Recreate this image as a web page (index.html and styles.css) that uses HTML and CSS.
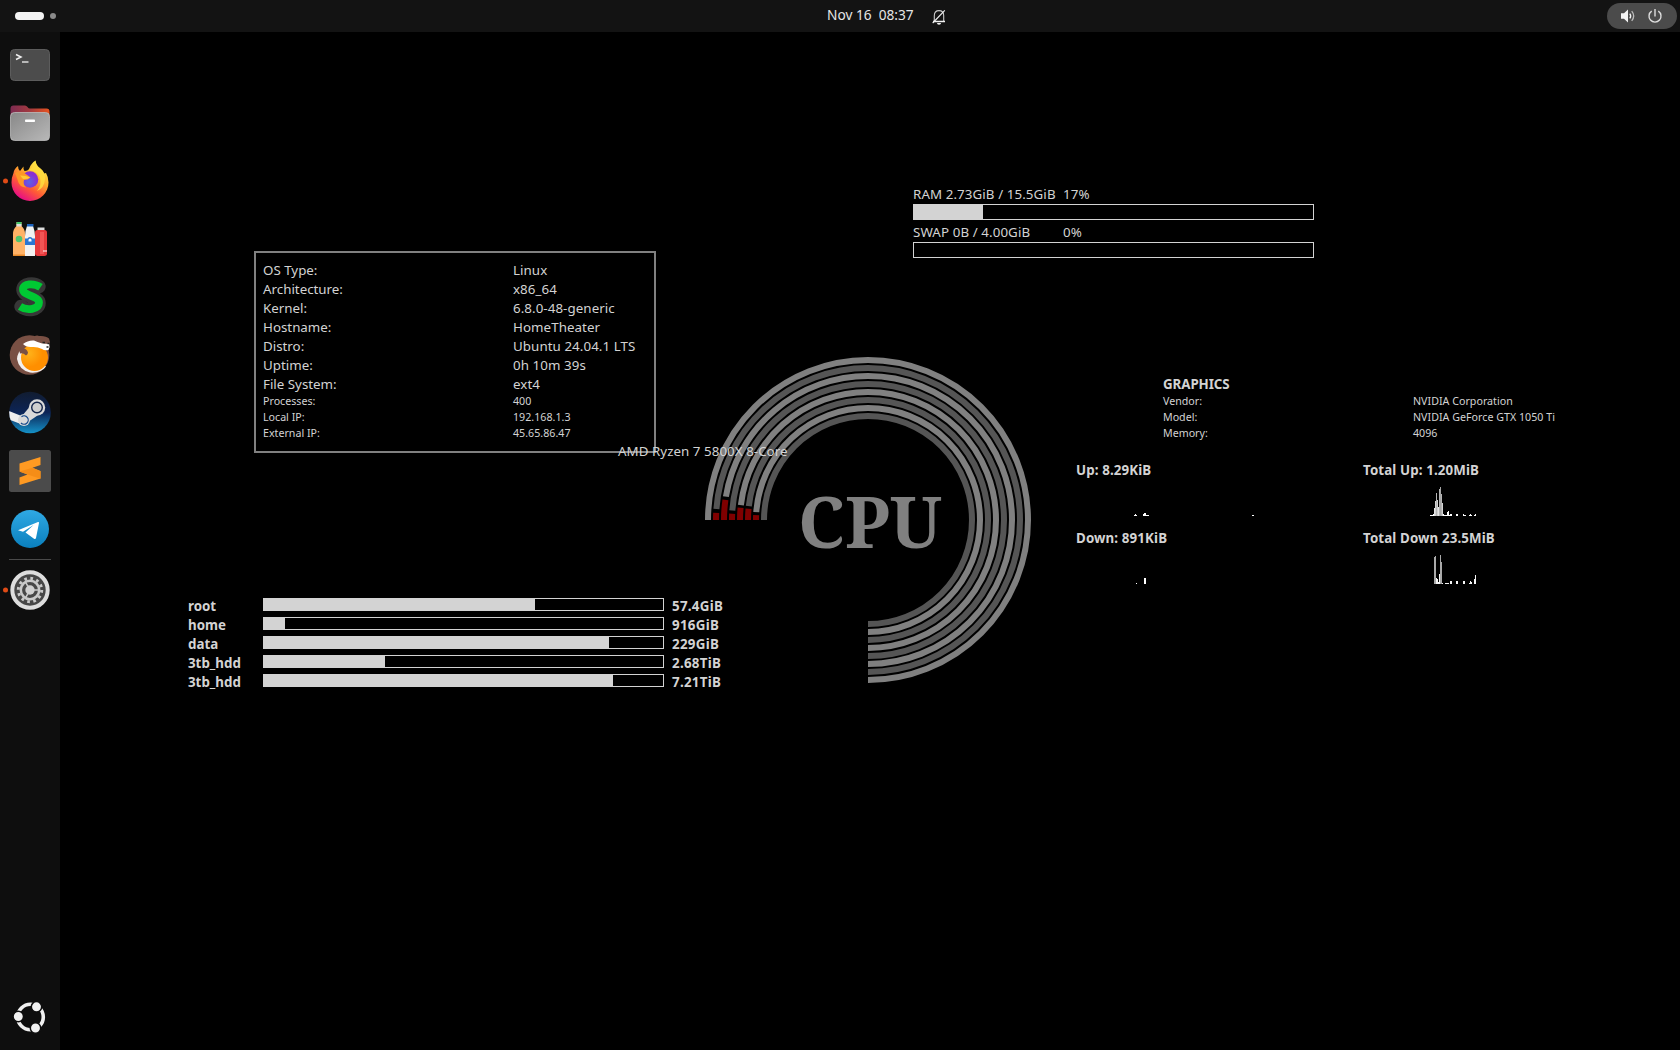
FILE: index.html
```html
<!DOCTYPE html>
<html lang="en">
<head>
<meta charset="utf-8">
<title>Desktop</title>
<link rel="stylesheet" href="styles.css">
</head>
<body>
<header class="topbar">
  <div class="workspaces"><span class="ws-active"></span><span class="ws-dot"></span></div>
  <div class="clock">Nov 16&nbsp; 08:37</div>
  <svg class="bell" width="14" height="16" viewBox="0 0 14 16" fill="none" stroke="#f2f2f2" stroke-width="1.1">
    <path d="M2.3 12V6.8C2.3 3.6 4 1.6 7 1.6s4.700 2 4.700 5.200V12" stroke="#c8c8c8"/>
    <path d="M1 12.500h12" stroke-width="1.500"/>
    <path d="M.7 14 12.800 1.300"/>
    <path d="M5 14h4a2 1.700 0 0 1-4 0z" fill="#f2f2f2" stroke="none"/>
  </svg>
  <div class="tray">
    <svg width="16" height="16" viewBox="0 0 16 16" fill="none" stroke="#f4f4f4" stroke-width="1.300">
      <path d="M1 5.300h3L8 1.500v13l-4-3.800H1z" fill="#f4f4f4" stroke="none"/>
      <path d="M9.800 5.600q1.800 2.400 0 4.800"/><path d="M11.700 3.200q4 4.800 0 9.600" stroke="#bbb"/>
    </svg>
    <svg width="16" height="16" viewBox="0 0 16 16" fill="none" stroke="#ddd" stroke-width="1.400">
      <path d="M4.700 3.100a6 6 0 1 0 6.600 0"/><path d="M8 1v7.500"/>
    </svg>
  </div>
</header>
<div class="shell">
  <nav class="dock">
    <svg class="app" viewBox="0 0 60 58">
      <rect x="10.500" y="13.500" width="39" height="31" rx="4" fill="#4c4c4c" stroke="#5c5c5c"/>
      <path d="M16 18.500l5 2.500-5 2.500" fill="none" stroke="#eee" stroke-width="1.500"/><path d="M22 26h6.500" stroke="#ddd" stroke-width="1.500"/>
    </svg>
    <svg class="app" viewBox="0 0 60 58">
      <defs>
        <linearGradient id="tab"><stop offset="0" stop-color="#7d2b51"/><stop offset=".5" stop-color="#a33a3f"/><stop offset="1" stop-color="#e95420"/></linearGradient>
        <linearGradient id="front" x2="1" y2="1"><stop offset="0" stop-color="#888"/><stop offset="1" stop-color="#b8b8b8"/></linearGradient>
      </defs>
      <path d="M10.500 24V14.500a3 3 0 0 1 3-3H25q1.500 0 2.500 1.500t2.500 1.500h16.500a3 3 0 0 1 3 3V24z" fill="url(#tab)"/>
      <rect x="10.500" y="18.500" width="39" height="28" rx="4" fill="url(#front)" stroke="#bdbdbd" stroke-width=".8"/>
      <rect x="25" y="25.500" width="10" height="2.600" rx=".8" fill="#fff"/>
    </svg>
    <svg class="app" viewBox="0 0 60 58">
      <defs>
        <linearGradient id="fox" x1=".85" y1=".1" x2=".3" y2="1"><stop offset="0" stop-color="#fff44f"/><stop offset=".35" stop-color="#ffb02c"/><stop offset=".65" stop-color="#ff5a36"/><stop offset="1" stop-color="#e5078c"/></linearGradient>
        <radialGradient id="globe" cx=".45" cy=".65"><stop offset="0" stop-color="#5b63e8"/><stop offset="1" stop-color="#8a2fd0"/></radialGradient>
      </defs>
      <circle cx="5.500" cy="29" r="2.500" fill="#df4b16"/>
      <path d="M13.500 21q.5-4 4.500-7 0 3.500 2 5l3.500-4.500q-.5 2.500 1 4.500 4 0 5-3 1.500-4.500 6-7.500 .5 5 4.500 8 3 2 4 5l2-.5q2.500 4 2.500 9.500a18.500 18.500 0 0 1-37 0q0-5 2-9.500z" fill="url(#fox)"/>
      <circle cx="30" cy="27.500" r="8.300" fill="url(#globe)"/>
      <path d="M29 18q5.500-4.500 6.500-9.500 .5 5 4.500 7.500 5.500 4 5 11-.5 9-8 12 5-6 3-13-2-7-11-8z" fill="#ffdd3f" opacity=".85"/>
      <path d="M15 21q6-3 10 .500 3 2 5.500 4-2.500 2.500-6.500 2.500-1.500 5 2.500 7.500-7.500 0-9-8z" fill="#ff9626"/>
      <path d="M20 23.500q6 0 10 2-3 2-7 1.500z" fill="#ffc934"/>
    </svg>
    <svg class="app" viewBox="0 0 60 58">
      <path d="M16.500 12h5v4q3.500 3 3.500 8v22H13V24q0-5 3.500-8z" fill="#ffb266"/><path d="M16.500 12h5v3h-5z" fill="#46c96f"/><path d="M16.500 14h5v2.500h-5z" fill="#ddd"/>
      <circle cx="19" cy="29" r="3.300" fill="#4fc46d"/><path d="M13 44.500h12V46H13z" fill="#e88a2a"/>
      <path d="M27 16h6q2 5 2 10v20H25V26q0-5 2-10z" fill="#f1f1f1"/><path d="M27 14h6.500v2.500H27z" fill="#1b62bd"/><path d="M25 28.500h10v6.500H25z" fill="#2a76d2"/><path d="M27.500 32v-2.500a2.500 2.500 0 0 1 5 0V32z" fill="#2a76d2"/><path d="M28.500 31.500v-1.500a1.500 1.500 0 0 1 3 0v1.500z" fill="#fff"/>
      <rect x="35" y="20" width="12" height="26" rx="2.500" fill="#e5393c"/><path d="M40 22h4v22h-4z" fill="#f25555"/><path d="M37.500 17.500h7V20h-7z" fill="#ddd"/><path d="M43 41h4" stroke="#fff"/>
    </svg>
    <svg class="app" viewBox="0 0 60 58" fill="none">
      <path d="M39 18.500C34 14.500 22.500 15 23 22c.5 6.500 16 6.500 16 13 0 7-11.500 8.500-18 3.500" stroke="#373737" stroke-width="13.500" stroke-linecap="round" stroke-linejoin="round"/>
      <path d="M40.500 19.300C34 14.800 22.800 15.300 23 21.500c.3 6.500 16 6.500 16 13 0 7-12 8.500-19 4" stroke="#00c933" stroke-width="7.800"/>
    </svg>
    <svg class="app" viewBox="0 0 60 58">
      <defs><radialGradient id="orange" cx=".3" cy=".35"><stop offset="0" stop-color="#ffb21a"/><stop offset="1" stop-color="#ff8f00"/></radialGradient></defs>
      <circle cx="29.500" cy="29" r="19.800" fill="#795044"/>
      <path d="M34 10.500q3-1.800 5-.5 7-.5 10 2.500 1.500 3 .5 7L36 20z" fill="#795044"/>
      <path d="M19 26q-2 4-2 7 2 11 13 13.500 11 1 16-6L20 25z" fill="#f3f0ee"/>
      <circle cx="34.500" cy="31.500" r="13.500" fill="url(#orange)"/>
      <path d="M23 18q5-4 11-3.500 7 3.500 15 3.500 1.500 3-.5 6-4 1-6.500-1-5-2.500-10-2-6 .5-9-3z" fill="#fff"/>
      <path d="M19 23.500q7-3 9 3 0 2-2 3-3-3-6-2z" fill="#795044"/>
      <path d="M42.500 16.500h2.500m1.500 4.500h2m-1-3.500h2" stroke="#222" stroke-width="1.500"/>
    </svg>
    <svg class="app" viewBox="0 0 60 58">
      <defs><linearGradient id="steam" x2="0" y2="1"><stop offset="0" stop-color="#111c30"/><stop offset=".5" stop-color="#0c2456"/><stop offset="1" stop-color="#1592c8"/></linearGradient>
      <clipPath id="steam-clip"><circle cx="30" cy="28.500" r="20.800"/></clipPath></defs>
      <circle cx="30" cy="28.500" r="20.800" fill="url(#steam)"/>
      <g clip-path="url(#steam-clip)" fill="#d9d9d9">
        <path d="M8 26.500l16 6.500-2 7.500L8 35z" fill="#eee"/>
        <path d="M29.500 23l8 8.500-9.500 6.500-6-6z"/>
        <circle cx="37" cy="23.500" r="8.200"/><circle cx="24" cy="36" r="6"/>
        <circle cx="37" cy="23.500" r="5.300" fill="#cfcfcf" stroke="#14264b" stroke-width="1.400"/>
        <path d="M21.500 32.700a4.200 4.200 0 1 1-.5 6.300" fill="none" stroke="#16498a" stroke-width="1.200"/>
      </g>
    </svg>
    <svg class="app" viewBox="0 0 60 58">
      <rect x="9" y="8" width="42" height="42" rx="2.500" fill="#4b4b4b"/>
      <path d="M40.500 15v8l-8 2.800 8 3.200v7.500L19.500 43v-7.500l8-3-8-3V21.500z" fill="#ff9a22"/>
      <path d="M19.500 29.500l8 3 13 4.200v-7.500l-8-3.400z" fill="#f58d17"/>
    </svg>
    <svg class="app" viewBox="0 0 60 58">
      <defs><linearGradient id="tg" x2="0" y2="1"><stop offset="0" stop-color="#2fa9e4"/><stop offset="1" stop-color="#0a7fbd"/></linearGradient></defs>
      <circle cx="30" cy="29" r="19" fill="url(#tg)"/>
      <path d="M18 30.300 38 22q1.200-.3 1 1l-3 15q-.5 1.700-2 .7l-8.500-6.300 8-7.400-10.500 6.800z" fill="#fff"/>
    </svg>
    <div class="separator"></div>
    <svg class="app" viewBox="0 0 60 58">
      <circle cx="5.500" cy="29" r="2.500" fill="#df4b16"/>
      <circle cx="30" cy="29" r="17.700" fill="#474747" stroke="#ddd" stroke-width="4"/>
      <circle cx="30" cy="29" r="11.700" fill="none" stroke="#c9c9c9" stroke-width="3" stroke-dasharray="2.700 3.426"/>
      <circle cx="30" cy="29" r="9.200" fill="none" stroke="#c9c9c9" stroke-width="2.500"/>
      <circle cx="30" cy="29" r="4.700" fill="#d0d0d0"/>
      <path d="M34 29h5M28 25.500l-2.500-4.300M28 32.500l-2.500 4.300" stroke="#c9c9c9" stroke-width="1.500"/>
    </svg>
    <svg class="app launcher" viewBox="0 0 60 58">
      <circle cx="30.500" cy="29" r="12.800" fill="none" stroke="#f0f0f0" stroke-width="3.600"/>
      <g fill="#f2f2f2" stroke="#0e0e0e" stroke-width="1.500"><circle cx="18.300" cy="28.500" r="5.200"/><circle cx="36.500" cy="18.800" r="5.200"/><circle cx="35.500" cy="40" r="5.200"/></g>
    </svg>
  </nav>

  <main class="desktop">
    <svg class="widget cpu" width="330" height="330" viewBox="703 355 330 330">
      <g fill="none" stroke-width="6">
        <g stroke="#808080">
          <path d="M708 520A160 160 0 1 1 868 680"/>
          <path d="M724 520A144 144 0 1 1 868 664" stroke-dasharray="0 23.500 2000"/>
          <path d="M740 520A128 128 0 1 1 868 648" stroke-dasharray="0 15 2000"/>
          <path d="M756 520A112 112 0 1 1 868 632" stroke-dasharray="0 8 2000"/>
        </g>
        <g stroke="#555">
          <path d="M716 520A152 152 0 1 1 868 672" stroke-dasharray="0 11 2000"/>
          <path d="M732 520A136 136 0 1 1 868 656" stroke-dasharray="0 9.500 2000"/>
          <path d="M748 520A120 120 0 1 1 868 640" stroke-dasharray="0 14 2000"/>
          <path d="M764 520A104 104 0 1 1 868 624"/>
        </g>
        <g stroke="#800000">
          <path d="M716 520A152 152 0 1 1 868 672" stroke-dasharray="7.200 2000"/>
          <path d="M724 520A144 144 0 1 1 868 664" stroke-dasharray="20.300 2000"/>
          <path d="M732 520A136 136 0 1 1 868 656" stroke-dasharray="6.300 2000"/>
          <path d="M740 520A128 128 0 1 1 868 648" stroke-dasharray="12.200 2000"/>
          <path d="M748 520A120 120 0 1 1 868 640" stroke-dasharray="11.200 2000"/>
          <path d="M756 520A112 112 0 1 1 868 632" stroke-dasharray="5 2000"/>
        </g>
      </g>
      <text class="cpu-label" x="798" y="548" textLength="144" lengthAdjust="spacingAndGlyphs">CPU</text>
    </svg>

    <section class="widget system">
      <dl class="pairs">
        <dt>OS Type:</dt><dd>Linux</dd>
        <dt>Architecture:</dt><dd>x86_64</dd>
        <dt>Kernel:</dt><dd>6.8.0-48-generic</dd>
        <dt>Hostname:</dt><dd>HomeTheater</dd>
        <dt>Distro:</dt><dd>Ubuntu 24.04.1 LTS</dd>
        <dt>Uptime:</dt><dd>0h 10m 39s</dd>
        <dt>File System:</dt><dd>ext4</dd>
      </dl>
      <dl class="pairs small">
        <dt>Processes:</dt><dd>400</dd>
        <dt>Local IP:</dt><dd>192.168.1.3</dd>
        <dt>External IP:</dt><dd>45.65.86.47</dd>
      </dl>
    </section>
    <div class="widget cpu-name">AMD Ryzen 7 5800X 8-Core</div>

    <section class="widget memory">
      <div class="mem-row"><span>RAM 2.73GiB / 15.5GiB</span><span>17%</span></div>
      <div class="bar"><div class="fill" style="width:69px"></div></div>
      <div class="mem-row"><span>SWAP 0B / 4.00GiB</span><span>0%</span></div>
      <div class="bar"></div>
    </section>

    <section class="widget graphics">
      <h2>GRAPHICS</h2>
      <dl class="pairs small">
        <dt>Vendor:</dt><dd>NVIDIA Corporation</dd>
        <dt>Model:</dt><dd>NVIDIA GeForce GTX 1050 Ti</dd>
        <dt>Memory:</dt><dd>4096</dd>
      </dl>
    </section>

    <section class="widget network">
      <div><h2>Up: 8.29KiB</h2>
        <svg width="200" height="30" viewBox="1076 0 200 30" stroke="#fff"><path d="M1134.500 30v-1m1 1v-2m1 2v-1M1143.500 30v-2m1 2v-3m1 3v-3m1 3v-1m1 1v-1m1 1v-1M1252.500 30v-1m1 1v-1"/></svg></div>
      <div><h2>Total Up: 1.20MiB</h2>
        <svg width="200" height="30" viewBox="-67 0 200 30"><path stroke="#fff" d="M.5 30v-1m1 1v-1m1 1v-1m1 1v-2M13.500 30v-2m1 2v-1m1 1v-1m1 1v-1m1 1v-4m1 4v-5m1 5v-1m1 1v-2m1 2v-2M26.500 30v-2m1 2v-2M33.500 30v-2m1 2v-1m1 1v-1M39.500 30v-1m1 1v-2m1 2v-1M44.500 30v-1m1 1v-2"/><path stroke="#e6e6e6" d="M4.500 30v-8M8.500 30v-9"/><path stroke="#d3d3d3" d="M5.500 30V15M7.500 30V14M12.500 30V17"/><path stroke="#b4b4b4" d="M6.500 30V7M9.500 30V3M11.500 30V8"/><path stroke="#a5a5a5" d="M10.500 30V1"/></svg></div>
      <div><h2>Down: 891KiB</h2>
        <svg width="200" height="30" viewBox="1076 0 200 30" stroke="#fff"><path d="M1136.500 30v-1M1144.500 30v-6m1 6v-6"/></svg></div>
      <div><h2>Total Down 23.5MiB</h2>
        <svg width="200" height="30" viewBox="-67 0 200 30"><path stroke="#f5f5f5" d="M6.500 30v-6m1 6v-5m1 5v-2M12.500 30v-1M15.500 30v-1m1 1v-1m1 1v-1m1 1v-1M20.500 30v-3m1 3v-3M26.500 30v-3m1 3v-3M33.500 30v-3m1 3v-3M39.500 30v-1m1 1v-3m1 3v-2M44.500 30v-5m1 5v-9M9.500 30V20"/><path stroke="#a9a9a9" d="M4.500 30V3M5.500 30V2M10.500 30V1M11.500 30V8"/></svg></div>
    </section>

    <section class="widget disks">
      <span>root</span><div class="bar"><div class="fill" style="width:271px"></div></div><span class="size">57.4GiB</span>
      <span>home</span><div class="bar"><div class="fill" style="width:21px"></div></div><span class="size">916GiB</span>
      <span>data</span><div class="bar"><div class="fill" style="width:345px"></div></div><span class="size">229GiB</span>
      <span>3tb_hdd</span><div class="bar"><div class="fill" style="width:121px"></div></div><span class="size">2.68TiB</span>
      <span>3tb_hdd</span><div class="bar"><div class="fill" style="width:349px"></div></div><span class="size">7.21TiB</span>
    </section>
  </main>
</div>
</body>
</html>
```
FILE: styles.css
```css
* { box-sizing: border-box; }
body {
  margin: 0;
  width: 1680px;
  height: 1050px;
  overflow: hidden;
  display: flex;
  flex-direction: column;
  background: #000;
  color: #d3d3d3;
  font: 13.33px/19px "Noto Sans", sans-serif;
}
svg { display: block; }
h2, dl, dt, dd { margin: 0; font-size: inherit; white-space: nowrap; }

.topbar {
  height: 32px;
  flex: none;
  background: #131313;
  display: grid;
  grid-template-columns: 812px 105px 15px 1fr;
  align-items: center;
  padding-left: 15px;
}
.workspaces { display: flex; align-items: center; gap: 6px; }
.ws-active { width: 29px; height: 8px; border-radius: 4px; background: #f4f4f4; }
.ws-dot { width: 6px; height: 6px; border-radius: 3px; background: #8a8a8a; }
.clock { color: #e6e6e6; font-size: 13.7px; line-height: 20px; padding-bottom: 2px; }
.bell { margin-top: 1px; }
.tray {
  justify-self: end;
  margin-right: 3px;
  width: 70px;
  height: 26px;
  border-radius: 13px;
  background: #4b4b4b;
  display: flex;
  align-items: center;
  gap: 11px;
  padding-left: 13px;
}

.shell { flex: 1; display: flex; }
.dock {
  width: 60px;
  background: #0e0e0e;
  padding: 4px 0;
  display: flex;
  flex-direction: column;
}
.app { width: 60px; height: 58px; flex: none; }
.separator { height: 1px; margin: 1px 9px; background: #4a4a4a; }
.launcher { margin-top: auto; }

/* Monitor widgets sit freely on the desktop; offsets are from its top left. */
.desktop { flex: 1; position: relative; }
.widget { position: absolute; }

.pairs { display: grid; grid-template-columns: 250px 1fr; }
.pairs dd { letter-spacing: .07px; }
.small { font-size: 10.67px; line-height: 16px; }
.small dd { letter-spacing: .02px; }

.system {
  left: 194px;
  top: 219px;
  width: 402px;
  height: 202px;
  border: 2px solid #808080;
  padding: 8px 0 0 7px;
}
.system .small { margin-top: -1px; }
.cpu { left: 643px; top: 323px; }
.cpu-label {
  font: bold 70px "Noto Serif", "DejaVu Serif Condensed", "DejaVu Serif", serif;
  fill: #808080;
}
.cpu-name { left: 558px; top: 410px; white-space: nowrap; letter-spacing: .05px; }

.bar { border: 1px solid #d3d3d3; width: 401px; }
.fill { height: 100%; background: #d3d3d3; }

.memory { left: 853px; top: 153px; letter-spacing: .09px; }
.mem-row { display: grid; grid-template-columns: 150px 1fr; height: 19px; }
.memory .bar { height: 16px; }
.memory .bar + .mem-row { margin-top: 3px; }

.graphics { left: 1103px; top: 343px; }
.graphics h2 { letter-spacing: -.08px; }
.graphics .small { margin-top: -1px; }

.network {
  left: 1016px;
  top: 429px;
  display: grid;
  grid-template-columns: 287px 200px;
  row-gap: 13px;
  letter-spacing: .12px;
}
.network h2 { height: 25px; }

.disks {
  left: 128px;
  top: 565px;
  display: grid;
  grid-template-columns: 75px 409px 80px;
  grid-auto-rows: 19px;
  font-weight: bold;
}
.disks .bar { height: 13px; margin-top: 1px; }
.size { letter-spacing: .28px; }
```
